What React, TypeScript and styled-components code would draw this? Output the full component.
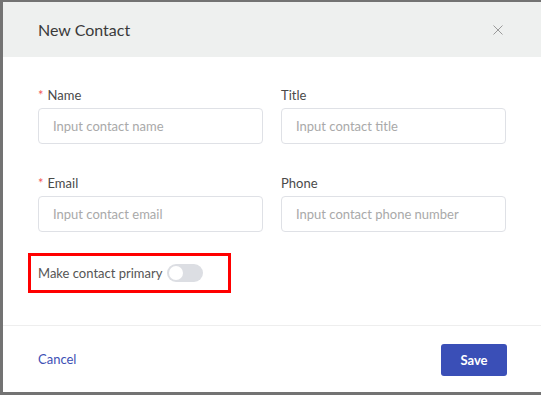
import { useState } from "react";
import styled, { createGlobalStyle } from "styled-components";

const GlobalStyle = createGlobalStyle`
    html, body {
        margin: 0;
        padding: 0;
        background: #737373;
        overflow: hidden;
    }
    body {
        font-family: Lato, "Noto Sans", sans-serif;
    }
`;

// dimmed page behind the dialog
const Backdrop = styled.div`
    width: 541px;
    height: 395px;
    padding: 2px 0 0 3px;
    box-sizing: border-box;
    overflow: hidden;
`;

const Modal = styled.div`
    width: 539px;
    height: 390px;
    background: #ffffff;
    display: flex;
    flex-direction: column;
`;

const Header = styled.div`
    height: 55px;
    flex-shrink: 0;
    background: #eef0ef;
    display: flex;
    align-items: center;
    justify-content: space-between;
    padding: 0 38px 0 35px;
`;

const Title = styled.h2`
    margin: 0;
    font-size: 16px;
    font-weight: 400;
    color: #3a3a3a;
`;

const CloseButton = styled.button`
    border: none;
    background: none;
    padding: 0;
    width: 12px;
    height: 12px;
    display: flex;
    cursor: pointer;
`;

const Body = styled.div`
    flex: 1;
    padding: 29px 35px 0;
    border-bottom: 1px solid #eeeeee;
`;

const Grid = styled.div`
    display: grid;
    grid-template-columns: 225px 225px;
    column-gap: 18px;
    row-gap: 30px;
`;

const Field = styled.div`
    display: flex;
    flex-direction: column;
    gap: 4px;
`;

const Label = styled.label`
    font-size: 13px;
    line-height: 18px;
    color: #4a4a4a;
`;

const Required = styled.span`
    color: #f25a5a;
    margin-right: 4px;
`;

const Input = styled.input`
    height: 36px;
    box-sizing: border-box;
    border: 1px solid #dfe1e6;
    border-radius: 4px;
    padding: 0 14px;
    font-family: inherit;
    font-size: 13px;
    color: #333;
    outline: none;
    &::placeholder {
        color: #a9a9a9;
    }
`;

// highlighted toggle row
const PrimaryRow = styled.div`
    margin: 21px 0 0 -10px;
    width: 203px;
    height: 40px;
    box-sizing: border-box;
    border: 3px solid #ff0000;
    display: flex;
    align-items: center;
    gap: 5px;
    padding-left: 7px;
`;

const RowText = styled.span`
    font-size: 13px;
    color: #555555;
`;

const Switch = styled.button<{ $on: boolean }>`
    width: 36px;
    height: 18px;
    border: none;
    border-radius: 9px;
    padding: 0;
    position: relative;
    background: ${(p) => (p.$on ? "#3a4fb7" : "#dcdee3")};
    cursor: pointer;

    &::after {
        content: "";
        position: absolute;
        top: 2px;
        left: ${(p) => (p.$on ? "20px" : "2px")};
        width: 14px;
        height: 14px;
        border-radius: 50%;
        background: #ffffff;
    }
`;

const Footer = styled.div`
    height: 66px;
    flex-shrink: 0;
    display: flex;
    align-items: center;
    justify-content: space-between;
    padding: 0 35px;
`;

const CancelButton = styled.button`
    border: none;
    background: none;
    padding: 0;
    font-family: inherit;
    font-size: 13px;
    color: #3d50b5;
    cursor: pointer;
`;

const SaveButton = styled.button`
    width: 66px;
    height: 32px;
    margin-top: 1px;
    border: none;
    border-radius: 3px;
    background: #3a4fb7;
    color: #ffffff;
    font-family: inherit;
    font-size: 13px;
    font-weight: 700;
    cursor: pointer;
`;

export default function App() {
    const [primary, setPrimary] = useState(false);

    return (
        <Backdrop>
            <GlobalStyle />
            <Modal>
                <Header>
                    <Title>New Contact</Title>
                    <CloseButton aria-label="Close">
                        <svg width="12" height="12" viewBox="0 0 12 12">
                            <path d="M1.5 1.5 L10.5 10.5 M10.5 1.5 L1.5 10.5" stroke="#9a9a9a" strokeWidth="1" />
                        </svg>
                    </CloseButton>
                </Header>

                <Body>
                    <Grid>
                        <Field>
                            <Label><Required>*</Required>Name</Label>
                            <Input placeholder="Input contact name" />
                        </Field>
                        <Field>
                            <Label>Title</Label>
                            <Input placeholder="Input contact title" />
                        </Field>
                        <Field>
                            <Label><Required>*</Required>Email</Label>
                            <Input placeholder="Input contact email" />
                        </Field>
                        <Field>
                            <Label>Phone</Label>
                            <Input placeholder="Input contact phone number" />
                        </Field>
                    </Grid>

                    <PrimaryRow>
                        <RowText>Make contact primary</RowText>
                        <Switch $on={primary} onClick={() => setPrimary(!primary)} />
                    </PrimaryRow>
                </Body>

                <Footer>
                    <CancelButton>Cancel</CancelButton>
                    <SaveButton>Save</SaveButton>
                </Footer>
            </Modal>
        </Backdrop>
    );
}
